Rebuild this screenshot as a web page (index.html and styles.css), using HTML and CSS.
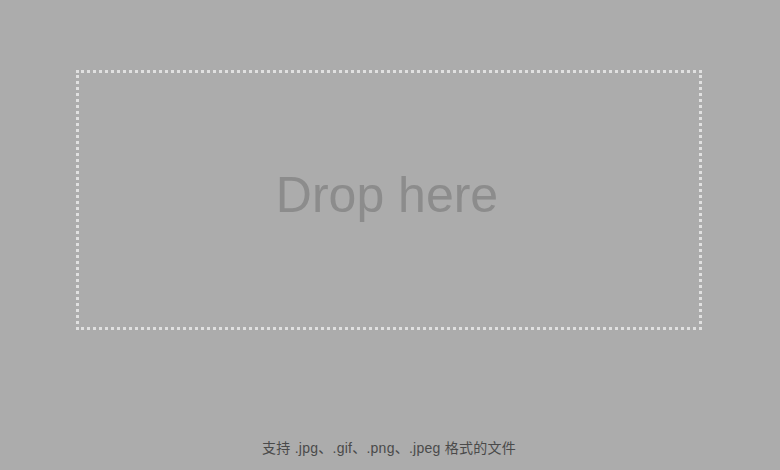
FILE: index.html
```html
<!DOCTYPE html>
<html>
<head>
<meta charset="utf-8">
<link rel="stylesheet" href="styles.css">
</head>
<body>
<div class="page">
  <div class="dropzone"><span class="drop-text">Drop here</span></div>
  <div class="hint">支持 .jpg、.gif、.png、.jpeg 格式的文件</div>
</div>
</body>
</html>
```
FILE: styles.css
```css
html, body {
  margin: 0;
  padding: 0;
  background: #acacac;
}
.page {
  width: 780px;
  height: 470px;
  box-sizing: border-box;
  padding: 70px 78px 0 76px;
  display: flex;
  flex-direction: column;
}
.dropzone {
  height: 260px;
  box-sizing: border-box;
  border: 3px dotted #e0e0e0;
  display: flex;
  align-items: center;
  justify-content: center;
}
.drop-text {
  font-family: "Helvetica Neue", "Liberation Sans", Arial, sans-serif;
  font-size: 50px;
  color: #8c8c8c;
  margin-top: -10px;
  margin-right: 4px;
}
.hint {
  margin-top: 108px;
  text-align: center;
  font-family: "Liberation Sans", "Noto Sans CJK SC", sans-serif;
  font-size: 14px;
  letter-spacing: 0.25px;
  color: #4a4a4a;
  line-height: 20px;
}
```
